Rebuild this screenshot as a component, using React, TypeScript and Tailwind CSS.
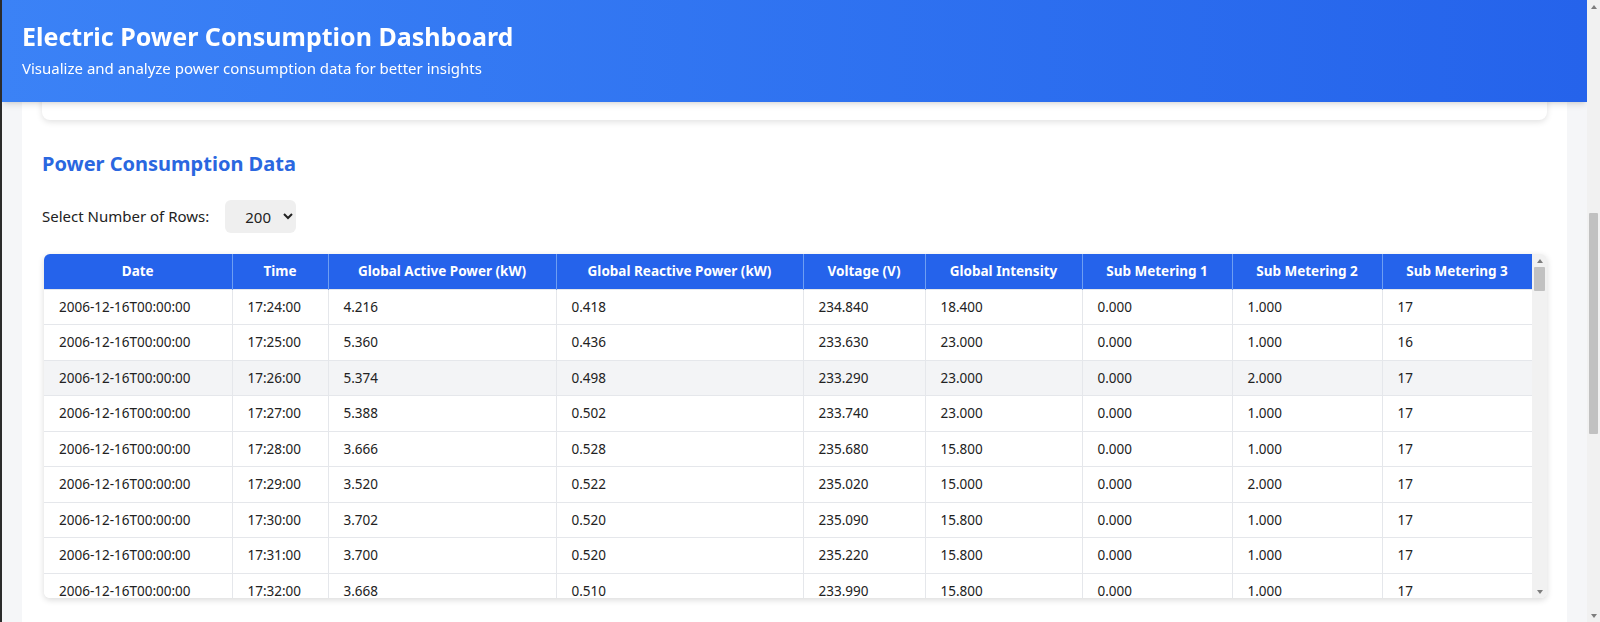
import { useLayoutEffect, useRef } from "react";

const known: string[][] = [
  ["4.216", "0.418", "234.840", "18.400", "0.000", "1.000", "17"],
  ["5.360", "0.436", "233.630", "23.000", "0.000", "1.000", "16"],
  ["5.374", "0.498", "233.290", "23.000", "0.000", "2.000", "17"],
  ["5.388", "0.502", "233.740", "23.000", "0.000", "1.000", "17"],
  ["3.666", "0.528", "235.680", "15.800", "0.000", "1.000", "17"],
  ["3.520", "0.522", "235.020", "15.000", "0.000", "2.000", "17"],
  ["3.702", "0.520", "235.090", "15.800", "0.000", "1.000", "17"],
  ["3.700", "0.520", "235.220", "15.800", "0.000", "1.000", "17"],
  ["3.668", "0.510", "233.990", "15.800", "0.000", "1.000", "17"],
  ["3.662", "0.510", "233.860", "15.800", "0.000", "2.000", "16"],
  ["4.448", "0.498", "232.860", "19.600", "0.000", "1.000", "17"],
  ["5.412", "0.470", "232.780", "23.200", "0.000", "1.000", "17"],
  ["5.224", "0.478", "232.990", "22.400", "0.000", "1.000", "16"],
  ["5.268", "0.398", "232.910", "22.600", "0.000", "2.000", "17"],
  ["4.054", "0.422", "235.240", "17.600", "0.000", "1.000", "17"],
  ["3.384", "0.282", "237.140", "14.200", "0.000", "0.000", "17"],
  ["3.270", "0.152", "236.730", "13.800", "0.000", "0.000", "17"],
  ["3.430", "0.156", "237.060", "14.400", "0.000", "0.000", "17"],
  ["3.266", "0.000", "237.130", "13.800", "0.000", "0.000", "18"],
  ["3.728", "0.000", "235.840", "16.400", "0.000", "0.000", "17"],
];

const pad = (n: number) => String(n).padStart(2, "0");

const rows = Array.from({ length: 200 }, (_, i) => {
  const m = 17 * 60 + 24 + i;
  const time = `${pad(Math.floor(m / 60))}:${pad(m % 60)}:00`;
  const vals =
    known[i] ??
    (() => {
      const p = 2.2 + 1.6 * Math.abs(Math.sin(i * 0.37));
      return [
        p.toFixed(3),
        (0.08 * Math.abs(Math.cos(i * 0.5))).toFixed(3),
        (234 + 2.5 * Math.sin(i * 0.21)).toFixed(3),
        (Math.round(p * 4.2 * 5) / 5).toFixed(3),
        "0.000",
        i % 7 === 0 ? "1.000" : "0.000",
        String(16 + (i % 3 === 0 ? 1 : 0)),
      ];
    })();
  return ["2006-12-16T00:00:00", time, ...vals];
});

const columns = [
  { label: "Date", w: "w-[188px]" },
  { label: "Time", w: "w-[96px]" },
  { label: "Global Active Power (kW)", w: "w-[228px]" },
  { label: "Global Reactive Power (kW)", w: "w-[247px]" },
  { label: "Voltage (V)", w: "w-[122px]" },
  { label: "Global Intensity", w: "w-[157px]" },
  { label: "Sub Metering 1", w: "w-[150px]" },
  { label: "Sub Metering 2", w: "w-[150px]" },
  { label: "Sub Metering 3", w: "w-[150px]" },
];

const ArrowUp = () => (
  <div className="flex h-[13px] items-center justify-center">
    <div className="h-0 w-0 border-x-[3.5px] border-b-[4px] border-x-transparent border-b-[#7d7d7d]" />
  </div>
);

const ArrowDown = () => (
  <div className="flex h-[13px] items-center justify-center">
    <div className="h-0 w-0 border-x-[3.5px] border-t-[4px] border-x-transparent border-t-[#7d7d7d]" />
  </div>
);

// drawn scrollbar: arrow, thumb at an offset, arrow
const ScrollBar = ({ top, size, className }: { top: string; size: string; className: string }) => (
  <div className={`flex shrink-0 flex-col bg-[#f1f1f1] ${className}`}>
    <ArrowUp />
    <div className={`mx-[2px] rounded-[1px] bg-[#c1c1c1] ${top} ${size}`} />
    <div className="flex-1" />
    <ArrowDown />
  </div>
);

export default function App() {
  const scroller = useRef<HTMLDivElement>(null);

  useLayoutEffect(() => {
    if (scroller.current) scroller.current.scrollTop = 582;
  }, []);

  return (
    <div className="flex h-[622px] border-l-2 border-[#2b2b2b] bg-[#f5f6f8] font-['Noto_Sans',sans-serif] text-[#222]">
      <div
        ref={scroller}
        className="h-full min-w-0 flex-1 overflow-y-scroll [scrollbar-width:none]"
      >
        <header className="sticky top-0 z-10 h-[102px] bg-linear-to-r from-[#3b82f6] to-[#2563eb] px-5 pt-5 text-white shadow-md">
          <h1 className="text-[25px] leading-8 font-bold">
            Electric Power Consumption Dashboard
          </h1>
          <p className="mt-[6px] text-[15px] leading-5">
            Visualize and analyze power consumption data for better insights
          </p>
        </header>

        <main className="mx-5 mt-5 bg-white p-5 pb-16">
          {/* charts card, scrolled under the header */}
          <div className="h-[560px] rounded-lg bg-white shadow-[0_2px_6px_rgba(0,0,0,0.12)]" />

          <section className="mt-[30px]">
            <h2 className="text-[20px] leading-7 font-bold text-[#2a67e0]">
              Power Consumption Data
            </h2>

            <div className="mt-[22px] flex h-[33px] items-center">
              <label htmlFor="rows" className="mr-4 text-[15px]">
                Select Number of Rows:
              </label>
              <select
                id="rows"
                defaultValue="200"
                className="h-[33px] w-[71px] rounded-md border-none bg-[#efefef] pl-4 text-[15px]"
              >
                <option value="10">10</option>
                <option value="50">50</option>
                <option value="100">100</option>
                <option value="200">200</option>
              </select>
            </div>

            <div className="mt-[21px] ml-[2px] flex h-[344px] w-[1503px] overflow-hidden rounded-md shadow-[0_2px_6px_rgba(0,0,0,0.15)]">
              <div className="h-full w-[1488px] overflow-y-auto [scrollbar-width:none]">
                <table className="w-[1488px] table-fixed border-collapse text-[13.5px]">
                  <thead>
                    <tr>
                      {columns.map((c) => (
                        <th
                          key={c.label}
                          className={`${c.w} sticky top-0 h-[35px] border-x border-[#6e9ef2] bg-[#2563eb] px-2 text-center font-bold text-white first:border-l-0`}
                        >
                          {c.label}
                        </th>
                      ))}
                    </tr>
                  </thead>
                  <tbody>
                    {rows.map((r, i) => (
                      <tr key={i} className={i === 2 ? "bg-[#f3f4f6]" : "bg-white"}>
                        {r.map((v, j) => (
                          <td
                            key={j}
                            className="h-[35.5px] border border-[#e5e7eb] pr-3 pl-[15px] first:border-l-0"
                          >
                            {v}
                          </td>
                        ))}
                      </tr>
                    ))}
                  </tbody>
                </table>
              </div>
              <ScrollBar top="mt-0" size="h-[24px]" className="w-[15px]" />
            </div>
          </section>
        </main>
      </div>

      <ScrollBar top="mt-[200px]" size="h-[221px]" className="w-[13px]" />
    </div>
  );
}
